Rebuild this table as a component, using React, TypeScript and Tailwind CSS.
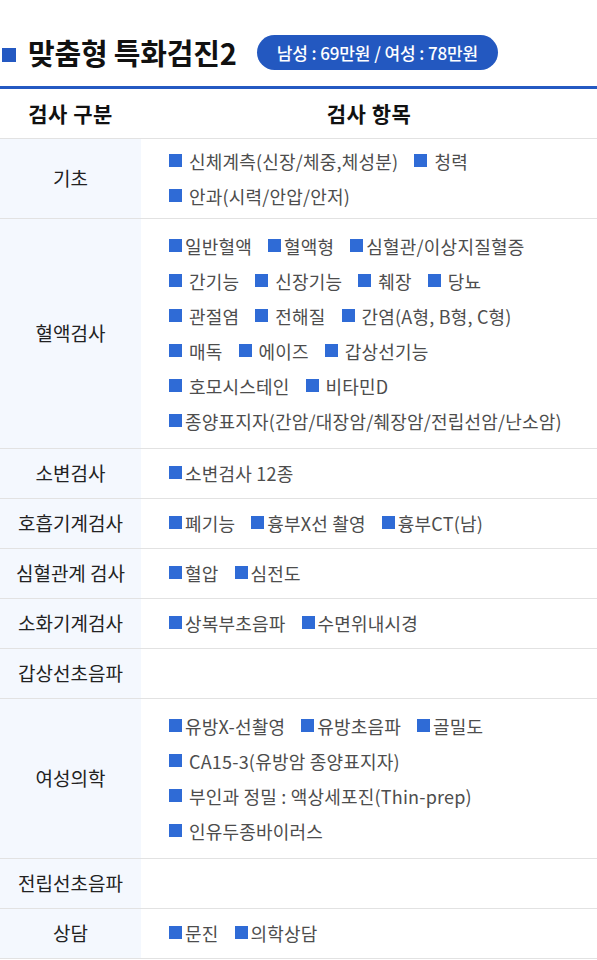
import React from 'react';

// --- Types ---

type Item = { t: string; sp?: boolean };

type Row = {
  label: string;
  h: string;
  lines: Item[][];
};

// sp = bullet followed by a space (wider gap)
const ROWS: Row[] = [
  {
    label: '기초',
    h: 'h-[80px]',
    lines: [
      [{ t: '신체계측(신장/체중,체성분)', sp: true }, { t: '청력', sp: true }],
      [{ t: '안과(시력/안압/안저)', sp: true }],
    ],
  },
  {
    label: '혈액검사',
    h: 'h-[230px]',
    lines: [
      [{ t: '일반혈액' }, { t: '혈액형' }, { t: '심혈관/이상지질혈증' }],
      [{ t: '간기능', sp: true }, { t: '신장기능', sp: true }, { t: '췌장', sp: true }, { t: '당뇨', sp: true }],
      [{ t: '관절염', sp: true }, { t: '전해질', sp: true }, { t: '간염(A형, B형, C형)', sp: true }],
      [{ t: '매독', sp: true }, { t: '에이즈', sp: true }, { t: '갑상선기능', sp: true }],
      [{ t: '호모시스테인', sp: true }, { t: '비타민D', sp: true }],
      [{ t: '종양표지자(간암/대장암/췌장암/전립선암/난소암)' }],
    ],
  },
  { label: '소변검사', h: 'h-[50px]', lines: [[{ t: '소변검사 12종' }]] },
  {
    label: '호흡기계검사',
    h: 'h-[50px]',
    lines: [[{ t: '폐기능' }, { t: '흉부X선 촬영' }, { t: '흉부CT(남)' }]],
  },
  { label: '심혈관계 검사', h: 'h-[50px]', lines: [[{ t: '혈압' }, { t: '심전도' }]] },
  { label: '소화기계검사', h: 'h-[50px]', lines: [[{ t: '상복부초음파' }, { t: '수면위내시경' }]] },
  { label: '갑상선초음파', h: 'h-[50px]', lines: [] },
  {
    label: '여성의학',
    h: 'h-[160px]',
    lines: [
      [{ t: '유방X-선촬영' }, { t: '유방초음파' }, { t: '골밀도' }],
      [{ t: 'CA15-3(유방암 종양표지자)', sp: true }],
      [{ t: '부인과 정밀 : 액상세포진(Thin-prep)', sp: true }],
      [{ t: '인유두종바이러스', sp: true }],
    ],
  },
  { label: '전립선초음파', h: 'h-[50px]', lines: [] },
  { label: '상담', h: 'h-[50px]', lines: [[{ t: '문진' }, { t: '의학상담' }]] },
];

function Bullet({ item }: { item: Item }) {
  return (
    <span className={`flex items-center ${item.sp ? 'gap-[7px]' : 'gap-[3px]'}`}>
      <span className="w-[13px] h-[13px] bg-[#2f6bd6] -translate-y-[1px] shrink-0" />
      <span className="tracking-[0.2px]">{item.t}</span>
    </span>
  );
}

export default function App() {
  return (
    <div
      className="w-[597px] bg-white text-[#222]"
      style={{ fontFamily: '"Noto Sans CJK KR", "Noto Sans", sans-serif' }}
    >
      {/* Title */}
      <div className="flex items-center pt-[35px] pb-[16px]">
        <span className="ml-[2px] w-[14px] h-[14px] bg-[#2459c2] mt-[4px]" />
        <h1 className="ml-[12px] text-[29px] leading-[35px] font-bold tracking-[-0.2px] text-[#111]">
          맞춤형 특화검진2
        </h1>
        <span className="ml-[20px] h-[35px] px-[20px] rounded-full bg-[#2358c0] text-white text-[17px] font-medium flex items-center tracking-[-0.1px]">
          남성 : 69만원 / 여성 : 78만원
        </span>
      </div>
      <div className="h-[3px] bg-[#2459c2]" />

      {/* Table header */}
      <div className="flex h-[50px] border-b border-[#e2e2e2] text-[21px] font-bold text-[#111] tracking-[0.5px]">
        <div className="w-[141px] flex items-center justify-center">검사 구분</div>
        <div className="flex-1 flex items-center justify-center">검사 항목</div>
      </div>

      {/* Rows */}
      {ROWS.map((row) => (
        <div key={row.label} className={`flex border-b border-[#e2e2e2] ${row.h}`}>
          <div className="w-[141px] bg-[#f4f8fe] flex items-center justify-center text-[19px] font-normal text-[#222]">
            {row.label}
          </div>
          <div className="flex-1 pl-[28px] flex flex-col justify-center text-[18px] text-[#4d4d4d]">
            {row.lines.map((line, i) => (
              <div key={i} className="flex items-center gap-x-[16px] h-[35px]">
                {line.map((it) => (
                  <Bullet key={it.t} item={it} />
                ))}
              </div>
            ))}
          </div>
        </div>
      ))}
    </div>
  );
}
